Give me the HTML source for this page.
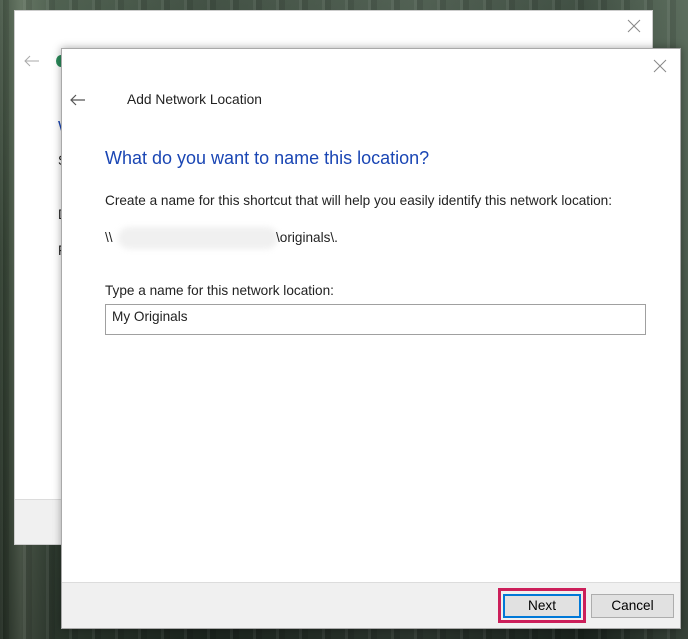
<!DOCTYPE html>
<html><head><style>
*{margin:0;padding:0;box-sizing:border-box}
body{width:688px;height:639px;overflow:hidden;position:relative;font-family:"Liberation Sans",sans-serif;
background:linear-gradient(90deg,#2c3a2c 0%,#5d6b5a 3%,#3a4a3c 8%,#27332a 30%,#3d4a40 60%,#243028 85%,#4e5e50 100%);}
.bgt{position:absolute;left:0;top:0;width:688px;height:639px;background:repeating-linear-gradient(90deg,rgba(255,255,255,.06) 0 3px,rgba(0,0,0,.1) 3px 9px,rgba(255,255,255,0) 9px 23px),linear-gradient(180deg,rgba(120,140,120,.35) 0%,rgba(0,0,0,0) 40%,rgba(0,0,0,.3) 100%)}
.win{position:absolute;background:#fff;border:1px solid #a9a9a9}
.back{left:14px;top:10px;width:639px;height:535px;border-color:#ccc}
.back .foot{position:absolute;left:0;right:0;top:488px;bottom:0;background:#f0f0f0;border-top:1px solid #dcdcdc}
.front{left:61px;top:48px;width:620px;height:581px;box-shadow:0 0 8px rgba(0,0,0,.35)}
.front .foot{position:absolute;left:0;right:0;top:533px;bottom:0;background:#f0f0f0;border-top:1px solid #dcdcdc}
.t{position:absolute;font-size:13.6px;color:#222;white-space:nowrap}
.btn{position:absolute;top:545px;height:24px;background:#e1e1e1;border:1px solid #adadad;font-size:13.6px;text-align:center;line-height:22px;color:#000}
</style></head><body>
<div class="bgt"></div>
<div class="win back">
  <svg style="position:absolute;left:612px;top:8px" width="14" height="14"><path d="M1 1L13 13M13 1L1 13" stroke="#888" stroke-width="1"/></svg>
  <svg style="position:absolute;left:9px;top:44px" width="16" height="12"><path d="M1 6H15M6 1L1 6L6 11" stroke="#aaa" stroke-width="1" fill="none"/></svg>
  <div style="position:absolute;left:41px;top:44px;width:10px;height:12px;border-radius:50%;background:#2a8a5a"></div>
  <div class="t" style="left:43px;top:108px;color:#1a46b4;font-size:16px">W</div>
  <div class="t" style="left:43px;top:142px">S</div>
  <div class="t" style="left:43px;top:196px">D</div>
  <div class="t" style="left:43px;top:232px">F</div>
  <div class="foot"></div>
</div>
<div class="win front">
  <svg style="position:absolute;left:591px;top:10px" width="14" height="14"><path d="M1 1L13 13M13 1L1 13" stroke="#888" stroke-width="1"/></svg>
  <svg style="position:absolute;left:8px;top:45px" width="16" height="12"><path d="M1 6H15M6 1L1 6L6 11" stroke="#555" stroke-width="1.2" fill="none"/></svg>
  <div class="t" style="left:65px;top:43px;font-size:13.8px">Add Network Location</div>
  <div class="t" style="left:43px;top:99px;font-size:18px;color:#1a46b4">What do you want to name this location?</div>
  <div class="t" style="left:43px;top:144px">Create a name for this shortcut that will help you easily identify this network location:</div>
  <div class="t" style="left:43px;top:181px">\\</div>
  <div style="position:absolute;left:56px;top:178px;width:160px;height:22px;border-radius:11px;background:#f0f0f0;filter:blur(3px)"></div>
  <div class="t" style="left:214px;top:181px">\originals\.</div>
  <div class="t" style="left:43px;top:234px">Type a name for this network location:</div>
  <div style="position:absolute;left:43px;top:255px;width:541px;height:31px;border:1px solid #a0a0a0;background:#fff"></div>
  <div class="t" style="left:50px;top:260px">My Originals</div>
  <div class="foot"></div>
  <div style="position:absolute;left:436px;top:539px;width:88px;height:35px;border:3px solid #cc1f5a;background:transparent"></div>
  <div class="btn" style="left:441px;width:78px;border:2px solid #0078d7;line-height:20px">Next</div>
  <div class="btn" style="left:529px;width:83px">Cancel</div>
</div>
</body></html>
